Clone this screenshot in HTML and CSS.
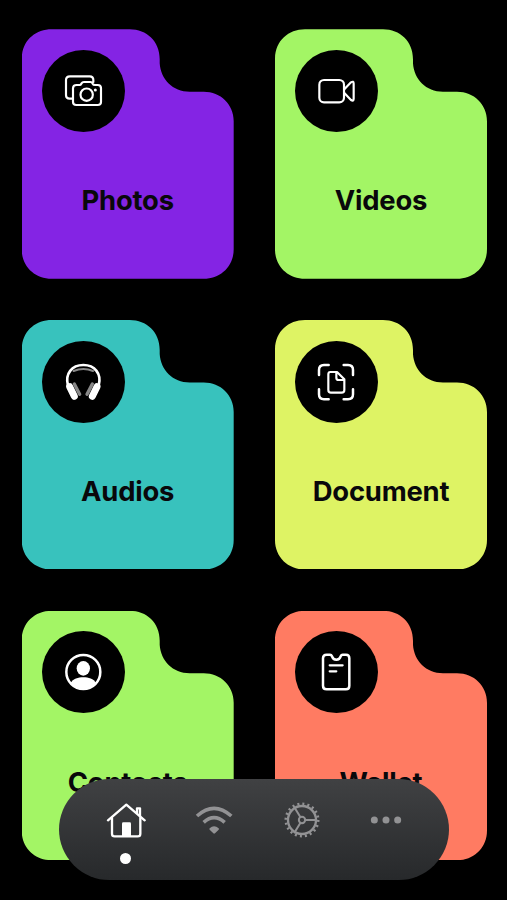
FILE: index.html
```html
<!DOCTYPE html>
<html lang="en">
<head>
<meta charset="utf-8">
<meta name="viewport" content="width=device-width, initial-scale=1">
<title>Files</title>
<link rel="stylesheet" href="styles.css">
</head>
<body>
<svg class="defs" width="0" height="0" aria-hidden="true">
  <clipPath id="folder"><path d="M30 0H108C125 0 138 12 138 30V34C139 50 151 62.5 168 62.5H182C199 62.5 212 75 212 92V220C212 237 199 249.5 182 249.5H30C13 249.5 0 237 0 220V30C0 12 13 0 30 0Z"/></clipPath>
</svg>
<main class="grid">
  <a class="card purple">
    <span class="badge"><svg viewBox="-24 -30 249 246">
      <path d="M66 116H59Q48 116 48 106V60Q48 49 60 49H119Q130 49 130 60V66M80 75H89Q92 75 94 71Q97 66 102 66H121Q126 66 128 71Q130 75 135 75H143Q153 75 153 85V126Q153 135 143 135H79Q69 135 69 126V85Q69 75 80 75Z"/>
      <circle cx="110" cy="104" r="18.5"/><circle class="solid" cx="136" cy="90" r="4.5"/>
    </svg></span>
    <h2>Photos</h2>
  </a>
  <a class="card green">
    <span class="badge"><svg viewBox="-15 -30 249 246">
      <rect x="58" y="60" width="74" height="67" rx="14"/>
      <path d="M133 88L153 67Q161 62 161 71V116Q161 125 153 120L133 99"/>
    </svg></span>
    <h2>Videos</h2>
  </a>
  <a class="card teal">
    <span class="badge"><svg viewBox="-24 -28 249 246">
      <path class="arc" d="M54 106C44 70 66 44 100 44S156 70 146 106"/>
      <path class="dim thin" d="M71 62Q100 50 129 62"/>
      <path class="pad" d="M59 109L73 138M141 109L127 138"/>
      <path class="dim cushion" d="M73 101L89 132M127 101L111 132"/>
    </svg></span>
    <h2>Audios</h2>
  </a>
  <a class="card yellow">
    <span class="badge"><svg viewBox="-14 -28 249 246">
      <path class="bold" d="M58 74V59Q58 44 73 44H87M132 44H145Q160 44 160 59V74M160 117V132Q160 147 145 147H132M87 147H73Q58 147 58 132V117"/>
      <path d="M92 65H112L134 87V119Q134 127 126 127H94Q86 127 86 119V72Q86 65 92 65ZM110 66V82Q110 89 117 89H133"/>
    </svg></span>
    <h2>Document</h2>
  </a>
  <a class="card green">
    <span class="badge"><svg viewBox="-24 -26 249 246">
      <circle class="bold" cx="100" cy="97" r="51"/>
      <ellipse class="solid" cx="100" cy="86" rx="20" ry="22"/>
      <path class="solid" d="M61 131C70 117 84 113 100 113S130 117 139 131Q123 149 100 149T61 131Z"/>
    </svg></span>
    <h2>Contacts</h2>
  </a>
  <a class="card coral">
    <span class="badge"><svg viewBox="-15 -26 249 246">
      <path class="bold" d="M80 45H90Q94 45 96 50Q99 60 109 60T122 50Q124 45 128 45H138Q148 45 148 56V138Q148 149 138 149H80Q69 149 69 138V56Q69 45 80 45Z"/>
      <path d="M89 77H128M89 95H109"/>
    </svg></span>
    <h2>Wallet</h2>
  </a>
</main>
<nav class="dock">
  <a class="tab home"><svg viewBox="0 0 120 120">
    <path d="M6 61L61 14L116 61" /><path d="M18 54V101Q18 109 26 109H95Q103 109 103 101V54M93 38V25H102V48"/>
    <path class="solid" d="M48 108V71Q48 67 52 67H71Q75 67 75 71V108Z"/>
  </svg><i class="dot"></i></a>
  <a class="tab"><svg viewBox="0 0 120 120">
    <path class="wave" d="M9 48Q60 2 112 48M29 67Q60 39 92 67"/>
    <path class="fill" d="M47 85Q60 72 74 85Q76 87 74 89L63 100Q60 102 58 100L47 89Q45 87 47 85Z"/>
  </svg></a>
  <a class="tab"><svg viewBox="0 0 120 120">
    <circle class="rim" cx="60" cy="60" r="42"/>
    <circle class="teeth" cx="60" cy="60" r="48.5" pathLength="200"/>
    <circle class="hub" cx="60" cy="60" r="9.5"/>
    <path class="spoke" d="M70 60H103M55 51L38 23M55 69L38 97"/>
  </svg></a>
  <a class="tab"><svg viewBox="0 0 120 120">
    <circle class="fill" cx="25" cy="60" r="10.5"/><circle class="fill" cx="60" cy="60" r="10.5"/><circle class="fill" cx="95" cy="60" r="10.5"/>
  </svg></a>
</nav>
</body>
</html>
```
FILE: styles.css
```css
* { box-sizing: border-box; }
body {
  margin: 0;
  height: 900px;
  overflow: hidden;
  background: #000;
  font-family: Inter, "Liberation Sans", sans-serif;
}
.defs { position: absolute; }
.grid {
  display: grid;
  grid-template-columns: 212px 212px;
  grid-auto-rows: 249.5px;
  gap: 41.2px 41.3px;
  padding: 29.3px 0 0 21.7px;
}
.card {
  clip-path: url(#folder);
  padding-top: 20.7px;
}
.purple { background: #8424e4; }
.green { background: #a3f565; }
.teal { background: #38c2bd; }
.yellow { background: #def364; }
.coral { background: #ff7b62; }
.badge {
  display: block;
  width: 83px;
  height: 82px;
  margin-left: 20.3px;
  border-radius: 50%;
  background: #000;
}
.badge svg { display: block; width: 83px; height: 82px; }
svg { fill: none; stroke: #fff; stroke-width: 6.5; stroke-linecap: round; stroke-linejoin: round; }
.solid { fill: #fff; stroke: none; }
.bold { stroke-width: 7.5; }
.arc { stroke-width: 8; }
.pad { stroke-width: 21; }
.dim { stroke: #888; }
.thin { stroke-width: 6; }
.cushion { stroke-width: 10; }
h2 {
  margin: 51.5px 0 0;
  color: #09080b;
  text-align: center;
  font-size: 27.4px;
  line-height: 34px;
  font-weight: 650;
  letter-spacing: -0.2px;
}
.dock {
  position: fixed;
  left: 58.5px;
  top: 779px;
  width: 390.5px;
  height: 101.3px;
  border-radius: 51px;
  background: linear-gradient(#404143, #27292b);
  display: grid;
  grid-template-columns: repeat(3, 88px) 80px;
  padding: 20.7px 0 0 23.2px;
}
.tab { display: flex; flex-direction: column; align-items: center; }
.tab svg { width: 40px; height: 40px; stroke: #929294; }
.tab .fill { fill: #929294; stroke: none; }
.home svg { stroke: #fff; stroke-width: 7; }
.dot { width: 11px; height: 11px; margin-top: 13.5px; border-radius: 50%; background: #fff; }
.wave { stroke-width: 11; stroke-linecap: butt; }
.rim { stroke-width: 7; }
.teeth { stroke-width: 8; stroke-linecap: butt; stroke-dasharray: 4 6; }
.hub, .spoke { stroke-width: 6; }
```
